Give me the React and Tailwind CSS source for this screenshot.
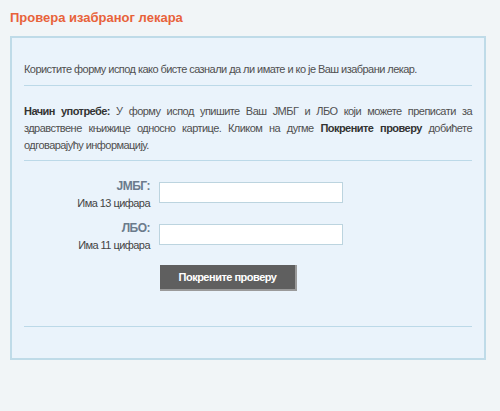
import React from "react";

function FieldRow({ label, hint }) {
  return (
    <div className="flex items-start">
      <div className="w-[126px] text-right leading-[17px]">
        <div className="font-bold text-[12px] tracking-[-0.5px] text-[#6b7b8c]">{label}</div>
        <div className="text-[11px] tracking-[-0.55px] text-[#444]">{hint}</div>
      </div>
      <input
        type="text"
        className="ml-[9px] mt-[4px] w-[184px] h-[21px] bg-white border border-[#bcd4df] outline-none"
      />
    </div>
  );
}

export default function App() {
  return (
    <div
      className="min-h-[411px] bg-[#f1f5f7] px-[10px] pt-[10px]"
      style={{ fontFamily: '"Liberation Sans", Arial, sans-serif' }}
    >
      <h1 className="text-[13px] font-bold text-[#e8623a] leading-[16px]">
        Провера изабраног лекара
      </h1>

      <div className="mt-[10px] w-[476px] h-[324px] border-2 border-[#bfdbe8] bg-[#eaf3fb] px-[12px] pt-[23px]">
        <p className="text-[11px] tracking-[-0.55px] leading-[17px] text-[#505050]">
          Користите форму испод како бисте сазнали да ли имате и ко је Ваш изабрани лекар.
        </p>
        <div className="mt-[7px] h-px bg-[#bcd9e8]" />

        <p className="mt-[17px] text-[11px] tracking-[-0.55px] leading-[17px] text-[#505050] text-justify">
          <b className="text-[#333]">Начин употребе:</b> У форму испод упишите Ваш ЈМБГ и ЛБО који можете преписати за
          здравствене књижице односно картице. Кликом на дугме{" "}
          <b className="text-[#333]">Покрените проверу</b> добићете одговарајућу информацију.
        </p>
        <div className="mt-[6px] h-px bg-[#bcd9e8]" />

        <div className="mt-[17px] flex flex-col gap-[8px]">
          <FieldRow label="ЈМБГ:" hint="Има 13 цифара" />
          <FieldRow label="ЛБО:" hint="Има 11 цифара" />
        </div>

        <div className="pl-[136px] mt-[10px]">
          <button className="w-[137px] h-[26px] bg-[#5f5f5f] border-b-2 border-r-2 border-[#9a9a9a] text-white text-[11px] tracking-[-0.5px] font-bold">
            Покрените проверу
          </button>
        </div>

        <div className="mt-[35px] h-px bg-[#bcd9e8]" />
      </div>
    </div>
  );
}
